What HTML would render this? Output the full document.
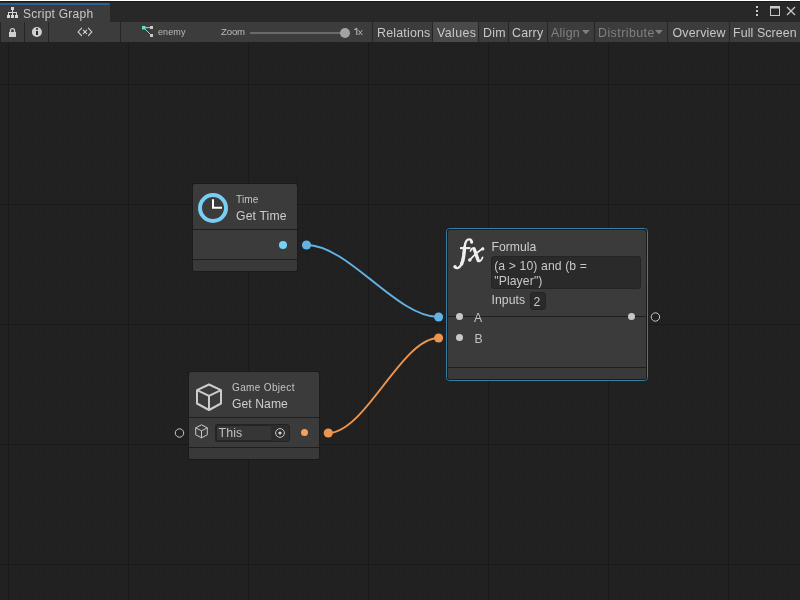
<!DOCTYPE html>
<html><head><meta charset="utf-8">
<style>
*{margin:0;padding:0;box-sizing:border-box}
html,body{width:800px;height:600px;overflow:hidden;background:#212121;font-family:"Liberation Sans",sans-serif;-webkit-font-smoothing:antialiased}
#wrap{position:absolute;left:0;top:0;width:800px;height:600px;will-change:transform}
.abs{position:absolute}
.sep{position:absolute;top:22px;width:1px;height:20px;background:#252525}
.tb{position:absolute;top:23px;height:20px;font-size:12.4px;line-height:20px;color:#c8c8c8;white-space:nowrap;letter-spacing:0.2px}
.dis{color:#808080}
.node{position:absolute;background:#3b3b3b;border-radius:2px;box-shadow:0 0 0 1px #1b1b1b}
.hsep{position:absolute;left:0;right:0;height:1px;background:#1f1f1f}
.lbl{position:absolute;white-space:nowrap;color:#cdcdcd}
</style></head><body><div id="wrap">
<!-- top strip -->
<div class="abs" style="left:0;top:0;width:800px;height:1px;background:#fff"></div>
<div class="abs" style="left:0;top:1px;width:800px;height:1px;background:#191919"></div>
<div class="abs" style="left:0;top:2px;width:800px;height:20px;background:#282828"></div>
<div class="abs" style="left:0;top:3px;width:110px;height:19px;background:#3c3c3c"></div>
<div class="abs" style="left:0;top:3px;width:110px;height:2px;background:#2d6193;border-radius:0 2px 0 0"></div>
<svg class="abs" style="left:0;top:0" width="24" height="22" viewBox="0 0 24 22">
 <g fill="#d6d6d6">
  <rect x="11" y="7" width="3" height="3"/>
  <rect x="12" y="10" width="1" height="2"/>
  <rect x="8" y="12" width="9" height="1"/>
  <rect x="8" y="13" width="1" height="2"/>
  <rect x="12" y="13" width="1" height="2"/>
  <rect x="16" y="13" width="1" height="2"/>
  <rect x="7" y="15" width="3" height="3"/>
  <rect x="11" y="15" width="3" height="3"/>
  <rect x="15" y="15" width="3" height="3"/>
 </g>
</svg>
<div class="abs" style="left:23px;top:6px;font-size:12px;line-height:16px;letter-spacing:0.25px;color:#c8c8c8;white-space:nowrap">Script Graph</div>
<!-- window buttons -->
<svg class="abs" style="left:740px;top:0" width="60" height="22" viewBox="740 0 60 22">
 <g fill="#c8c8c8">
  <rect x="756" y="6" width="2" height="2"/>
  <rect x="756" y="10" width="2" height="2"/>
  <rect x="756" y="14" width="2" height="2"/>
  <rect x="770" y="6" width="10" height="2.5"/>
 </g>
 <rect x="770.5" y="6.5" width="9" height="9" fill="none" stroke="#c8c8c8" stroke-width="1"/>
 <path d="M787 7 L795 15 M795 7 L787 15" stroke="#c8c8c8" stroke-width="1.3"/>
</svg>

<!-- toolbar -->
<div class="abs" style="left:0;top:22px;width:800px;height:20px;background:#3c3c3c"></div>
<div class="abs" style="left:433px;top:22px;width:45px;height:20px;background:#4a4a4a"></div>
<div class="sep" style="left:0"></div>
<div class="sep" style="left:24px"></div>
<div class="sep" style="left:48px"></div>
<div class="sep" style="left:120px"></div>
<div class="sep" style="left:372px"></div>
<div class="sep" style="left:432px"></div>
<div class="sep" style="left:478px"></div>
<div class="sep" style="left:508px"></div>
<div class="sep" style="left:547px"></div>
<div class="sep" style="left:594px"></div>
<div class="sep" style="left:667px"></div>
<div class="sep" style="left:729px"></div>
<!-- lock -->
<svg class="abs" style="left:0;top:22px" width="50" height="20" viewBox="0 22 50 20">
 <path d="M10.5 32.5 V30.6 A2 2 0 0 1 14.5 30.6 V32.5" fill="none" stroke="#cfcfcf" stroke-width="1.35"/>
 <rect x="9" y="32" width="7" height="5" fill="#cfcfcf"/>
 <circle cx="36.9" cy="32" r="5" fill="#cfcfcf"/>
 <rect x="36" y="28.2" width="2" height="1.6" fill="#2a2a2a"/>
 <rect x="36" y="31" width="2" height="4" fill="#2a2a2a"/>
</svg>
<!-- <x> -->
<svg class="abs" style="left:70px;top:22px" width="30" height="20" viewBox="70 22 30 20">
 <path d="M81.6 28.2 L78.1 31.9 L81.6 35.7 M88.4 28.2 L91.8 31.9 L88.4 35.7 M83.3 30.2 L86.7 33.6 M86.7 30.2 L83.3 33.6" fill="none" stroke="#d0d0d0" stroke-width="1.1" stroke-linecap="round"/>
</svg>
<!-- graph icon -->
<svg class="abs" style="left:138px;top:22px" width="20" height="20" viewBox="138 22 20 20">
 <path d="M144 27.8 L151.5 27.5 M144 28 L151.5 35.5" stroke="#bdbdbd" stroke-width="1"/>
 <path d="M144 28 L147 31" stroke="#7fd8c8" stroke-width="1"/>
 <rect x="142" y="26" width="3.5" height="3.5" fill="#5ee0cc"/>
 <rect x="150" y="26" width="3" height="3" fill="#c8c8c8"/>
 <rect x="150" y="34" width="3" height="3" fill="#c8c8c8"/>
</svg>
<div class="tb" style="left:158px;font-size:9px;letter-spacing:0.1px;color:#bcbcbc;top:22px">enemy</div>
<div class="tb" style="left:221px;font-size:9.6px;letter-spacing:-0.15px;color:#bcbcbc;top:21.6px">Zoom</div>
<div class="abs" style="left:250px;top:32px;width:95px;height:2px;background:#6a6a6a"></div>
<div class="abs" style="left:339.8px;top:27.8px;width:10.4px;height:10.4px;border-radius:50%;background:#a3a3a3"></div>
<svg class="abs" style="left:350px;top:22px" width="16" height="20" viewBox="350 22 16 20">
 <path d="M356.8 28.2 V35 M354.5 29.8 L356.8 28.2" fill="none" stroke="#bcbcbc" stroke-width="1.05"/>
 <path d="M358.4 30.2 L362.3 35 M362.3 30.2 L358.4 35" fill="none" stroke="#bcbcbc" stroke-width="0.95"/>
</svg>
<div class="tb" style="left:377px">Relations</div>
<div class="tb" style="left:437px;letter-spacing:0.4px">Values</div>
<div class="tb" style="left:483px;letter-spacing:0.3px">Dim</div>
<div class="tb" style="left:512px">Carry</div>
<div class="tb dis" style="left:551px;letter-spacing:0.3px">Align</div>
<svg class="abs" style="left:582px;top:30px" width="8" height="5"><path d="M0 0 H7.8 L3.9 4.2 Z" fill="#808080"/></svg>
<div class="tb dis" style="left:598px;letter-spacing:0.45px">Distribute</div>
<svg class="abs" style="left:655px;top:30px" width="8" height="5"><path d="M0 0 H7.8 L3.9 4.2 Z" fill="#808080"/></svg>
<div class="tb" style="left:672.5px;letter-spacing:0.2px">Overview</div>
<div class="tb" style="left:733px;letter-spacing:0.1px">Full Screen</div>

<!-- grid -->
<svg class="abs" style="left:0;top:42px" width="800" height="558" viewBox="0 42 800 558">
 <defs>
  <pattern id="minor" x="8" y="0" width="12" height="12" patternUnits="userSpaceOnUse">
   <rect x="0" y="0" width="12" height="1" fill="#1f1f1f"/>
   <rect x="0" y="0" width="1" height="12" fill="#1f1f1f"/>
  </pattern>
  <pattern id="major" x="8" y="84" width="120" height="120" patternUnits="userSpaceOnUse">
   <rect x="0" y="0" width="120" height="1" fill="#1a1a1a"/>
   <rect x="0" y="0" width="1" height="120" fill="#1a1a1a"/>
  </pattern>
 </defs>
 <rect x="0" y="42" width="800" height="558" fill="#212121"/>
 <rect x="0" y="42" width="800" height="558" fill="url(#minor)"/>
 <rect x="0" y="42" width="800" height="558" fill="url(#major)"/>
 <!-- connections -->
 <path d="M306.5 245 C348.5 245 396.5 317 438.5 317" fill="none" stroke="#62b2e4" stroke-width="2"/>
 <path d="M328.3 433 C365.3 433 401.5 338 438.5 338" fill="none" stroke="#ec9550" stroke-width="2"/>
 <circle cx="306.5" cy="245" r="4.6" fill="#62b2e4"/>
 <circle cx="438.6" cy="317" r="4.5" fill="#62b2e4"/>
 <circle cx="328.3" cy="433" r="4.6" fill="#ec9550"/>
 <circle cx="438.6" cy="338" r="4.5" fill="#ec9550"/>
 <circle cx="179.5" cy="433" r="4.2" fill="none" stroke="#c8c8c8" stroke-width="1"/>
 <circle cx="655.4" cy="317" r="4.2" fill="none" stroke="#c8c8c8" stroke-width="1"/>
</svg>

<!-- Get Time node -->
<div class="node" style="left:193px;top:184px;width:104px;height:87px">
 <div class="hsep" style="top:45px"></div>
 <div class="hsep" style="top:75px"></div>
 <div class="abs" style="left:0;top:76px;width:104px;height:11px;background:#393939;border-radius:0 0 2px 2px"></div>
 <svg class="abs" style="left:0;top:0" width="40" height="45" viewBox="193 184 40 45">
  <circle cx="213" cy="208" r="13" fill="none" stroke="#78cef4" stroke-width="4"/>
  <path d="M213 199.2 V207.8 H222" fill="none" stroke="#fff" stroke-width="2"/>
 </svg>
 <div class="lbl" style="left:43px;top:10px;font-size:10px;line-height:12px;letter-spacing:0.15px;color:#c4c4c4">Time</div>
 <div class="lbl" style="left:43px;top:24.5px;font-size:12.2px;line-height:14px;letter-spacing:0.15px">Get Time</div>
 <div class="abs" style="left:85.8px;top:56.6px;width:8.5px;height:8.5px;border-radius:50%;background:#76cff7"></div>
</div>

<!-- Get Name node -->
<div class="node" style="left:189px;top:372px;width:130px;height:87px">
 <div class="hsep" style="top:45px"></div>
 <div class="hsep" style="top:75px"></div>
 <div class="abs" style="left:0;top:76px;width:130px;height:11px;background:#393939;border-radius:0 0 2px 2px"></div>
 <svg class="abs" style="left:0;top:0" width="130" height="87" viewBox="189 372 130 87">
  <path d="M209 384.5 L221 390.2 V403.5 L209 410 L197 403.5 V390.2 Z M197 390.2 L209 395.8 L221 390.2 M209 395.8 V410" fill="none" stroke="#cccccc" stroke-width="2" stroke-linejoin="round"/>
  <path d="M201.5 424.8 L207.3 427.8 V434.8 L201.5 437.8 L195.7 434.8 V427.8 Z M195.7 427.8 L201.5 430.8 L207.3 427.8 M201.5 430.8 V437.8" fill="none" stroke="#c8c8c8" stroke-width="1" stroke-linejoin="round"/>
 </svg>
 <div class="lbl" style="left:43px;top:10px;font-size:10px;line-height:12px;letter-spacing:0.35px;color:#c4c4c4">Game Object</div>
 <div class="lbl" style="left:43px;top:25px;font-size:12.2px;line-height:14px;letter-spacing:0.05px">Get Name</div>
 <div class="abs" style="left:26px;top:52px;width:75px;height:17.5px;background:#2d2d2d;border:1px solid #232323;border-radius:3px"></div>
 <div class="abs" style="left:26px;top:52px;width:56px;height:17.5px;background:#363636;border:2px solid #242424;border-right:0;border-radius:3px 0 0 3px"></div>
 <div class="lbl" style="left:29.5px;top:54px;font-size:12.4px;line-height:14px;letter-spacing:0.1px;color:#c0c0c0">This</div>
 <svg class="abs" style="left:86px;top:55.8px" width="10" height="10" viewBox="0 0 10 10">
  <circle cx="5" cy="5" r="4.4" fill="none" stroke="#c8c8c8" stroke-width="1"/>
  <circle cx="5" cy="5" r="1.6" fill="#d8d8d8"/>
 </svg>
 <div class="abs" style="left:111.9px;top:57.1px;width:7.4px;height:7.4px;border-radius:50%;background:#f5a05c"></div>
</div>

<!-- Formula node -->
<div class="abs" style="left:446px;top:228px;width:202px;height:153px;border:1px solid #3b7ca2;border-radius:3.5px"></div>
<div class="node" style="left:448px;top:230px;width:198px;height:149px">
 <div class="hsep" style="top:86px"></div>
 <div class="hsep" style="top:137px"></div>
 <div class="abs" style="left:0;top:138px;width:198px;height:11px;background:#393939;border-radius:0 0 2px 2px"></div>
 <svg class="abs" style="left:0;top:0" width="50" height="50" viewBox="448 230 50 50">
  <g fill="none" stroke="#efefef" stroke-linecap="round">
   <path d="M471.8 242.4 C471.8 240.5 470.6 239.3 469 239.3 C466.5 239.3 465.3 242 464.8 246 L463.8 255 C463.2 260 462 264 460 266.5 C458.6 268.2 456.6 268.6 455.2 267.4" stroke-width="2.3"/>
   <path d="M464.6 247.5 L463.7 256 C463.3 259 462.8 261.5 461.6 264" stroke-width="3.4"/>
   <path d="M460 248.1 H470.4" stroke-width="2.1" stroke-linecap="butt"/>
   <path d="M474 248.8 C475.5 252 476.8 257 478.3 260.6" stroke-width="3.3"/>
   <path d="M470.5 251 C471.2 249 472.5 247.9 473.8 248.2" stroke-width="1.6"/>
   <path d="M478.3 260.8 C479.8 262.3 481.6 260 482.6 257.4" stroke-width="1.7"/>
   <path d="M482.9 248.3 C479 251 473 256 469.8 259.8" stroke-width="1.85"/>
  </g>
  <g fill="#efefef">
   <circle cx="471.6" cy="242" r="1.6"/>
   <circle cx="455" cy="266.8" r="1.7"/>
   <circle cx="482.8" cy="248.9" r="1.6"/>
   <circle cx="469.8" cy="260" r="1.8"/>
  </g>
 </svg>
 <div class="lbl" style="left:43.5px;top:9.8px;font-size:12.2px;line-height:14px;letter-spacing:0">Formula</div>
 <div class="abs" style="left:43px;top:26px;width:150px;height:33px;background:#2a2a2a;border:1px solid #242424;border-radius:3px"></div>
 <div class="lbl" style="left:46.2px;top:29px;font-size:12.2px;line-height:15px;letter-spacing:0.12px;color:#c8c8c8">(a &gt; 10) and (b =<br>"Player")</div>
 <div class="lbl" style="left:43.5px;top:63px;font-size:12.2px;line-height:14px;letter-spacing:0.1px">Inputs</div>
 <div class="abs" style="left:82px;top:62px;width:16px;height:18px;background:#2a2a2a;border:1px solid #242424;border-radius:3px"></div>
 <div class="lbl" style="left:85.5px;top:65px;font-size:12.2px;line-height:14px;color:#c8c8c8">2</div>
 <div class="abs" style="left:8.1px;top:83.3px;width:7.2px;height:7.2px;border-radius:50%;background:#c8c8c8"></div>
 <div class="abs" style="left:8.1px;top:104.3px;width:7.2px;height:7.2px;border-radius:50%;background:#c8c8c8"></div>
 <div class="abs" style="left:179.8px;top:83.3px;width:7.2px;height:7.2px;border-radius:50%;background:#c8c8c8"></div>
 <div class="lbl" style="left:26px;top:81px;font-size:12.2px;line-height:14px;color:#c2c2c2">A</div>
 <div class="lbl" style="left:26.5px;top:102px;font-size:12.2px;line-height:14px;color:#c2c2c2">B</div>
</div>
</div></body></html>
